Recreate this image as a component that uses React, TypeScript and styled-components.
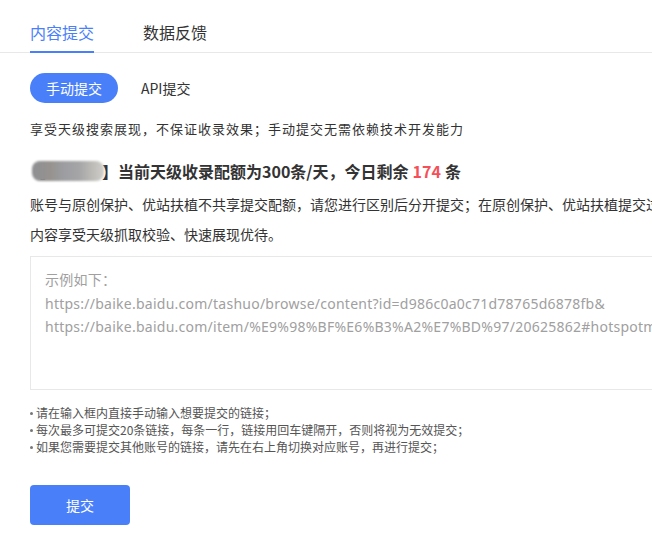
import React from "react";
import styled, { createGlobalStyle } from "styled-components";

const Global = createGlobalStyle`
  html, body { margin: 0; padding: 0; background: #fff; overflow: hidden; }
  body { font-family: "Noto Sans", "Noto Sans CJK SC", sans-serif; color: #333; }
`;

const Page = styled.div`
  width: 652px;
  height: 544px;
  overflow: hidden;
`;

const Inner = styled.div`
  width: 1000px;
  padding: 0 0 0 30px;
  box-sizing: border-box;
`;

const Tabs = styled.div`
  display: flex;
  gap: 49px;
  padding-top: 20px;
  border-bottom: 1px solid #e8e8e8;
  margin-left: -30px;
  padding-left: 30px;
`;

const Tab = styled.div<{ $active?: boolean }>`
  font-family: "Noto Sans CJK SC", sans-serif;
  font-size: 16px;
  line-height: 24px;
  padding-bottom: 7px;
  color: ${(p) => (p.$active ? "#4a7ffa" : "#333")};
  border-bottom: 2px solid ${(p) => (p.$active ? "#4a7ffa" : "transparent")};
  margin-bottom: -1px;
`;

const SubTabs = styled.div`
  display: flex;
  align-items: center;
  gap: 23px;
  margin-top: 20px;
`;

const Pill = styled.div<{ $active?: boolean }>`
  font-family: "Noto Sans CJK SC", sans-serif;
  height: 30px;
  line-height: 30px;
  font-size: 14px;
  border-radius: 15px;
  padding: ${(p) => (p.$active ? "0 16px" : "0")};
  background: ${(p) => (p.$active ? "#4a7ffa" : "transparent")};
  color: ${(p) => (p.$active ? "#fff" : "#333")};
`;

const Desc = styled.p`
  font-family: "Noto Sans CJK SC", sans-serif;
  margin: 15px 0 0;
  font-size: 13px;
  letter-spacing: 1px;
  line-height: 22px;
  color: #333;
`;

const Heading = styled.div`
  display: flex;
  align-items: center;
  margin-top: 19px;
  font-family: "Noto Sans CJK SC", sans-serif;
  font-size: 16px;
  font-weight: 700;
  line-height: 24px;
  color: #333;
`;

const Bracket = styled.span`
  font-weight: 700;
`;

const Blur = styled.span`
  display: inline-block;
  width: 72px;
  height: 20px;
  border-radius: 8px;
  margin-left: -14px;
  margin-right: -2px;
  background: linear-gradient(
    90deg,
    #8e8f93 0%,
    #96928f 25%,
    #9d9ea2 45%,
    #a5a5a7 65%,
    #bebdb8 85%,
    #cfcfcb 100%
  );
  filter: blur(0.8px);
`;

const Count = styled.span`
  color: #f5505a;
  margin: 0 4px;
`;

const Notice = styled.div`
  font-family: "Noto Sans CJK SC", sans-serif;
  margin-top: 6px;
  font-size: 14px;
  line-height: 30px;
  color: #333;
  white-space: nowrap;
`;

const TextBox = styled.div`
  margin-top: 7px;
  width: 800px;
  height: 134px;
  box-sizing: border-box;
  border: 1px solid #e8e8e8;
  padding: 11px 14px;
  font-size: 14px;
  line-height: 23.5px;
  letter-spacing: 0.25px;
  color: #a0a0a0;
  white-space: nowrap;
`;

const Hint = styled.div`
  font-family: "Noto Sans CJK SC", sans-serif;
  margin-top: 14px;
  font-size: 12px;
  line-height: 17px;
  color: #555;
`;

const HintLine = styled.div`
  display: flex;
  gap: 3px;
  &::before {
    content: "";
    width: 3px;
    height: 3px;
    border-radius: 50%;
    background: #777;
    align-self: center;
    margin-top: 1px;
  }
`;

const Submit = styled.button`
  display: block;
  margin-top: 30px;
  width: 100px;
  height: 40px;
  border: none;
  border-radius: 4px;
  background: #4a7ffa;
  color: #fff;
  font-family: "Noto Sans CJK SC", sans-serif;
  font-size: 14px;
  cursor: pointer;
`;

export default function App() {
  return (
    <Page>
      <Global />
      <Inner>
        <Tabs>
          <Tab $active>内容提交</Tab>
          <Tab>数据反馈</Tab>
        </Tabs>
        <SubTabs>
          <Pill $active>手动提交</Pill>
          <Pill>API提交</Pill>
        </SubTabs>
        <Desc>享受天级搜索展现，不保证收录效果；手动提交无需依赖技术开发能力</Desc>
        <Heading>
          <Bracket>【</Bracket>
          <Blur />
          <Bracket>】</Bracket>
          当前天级收录配额为300条/天，今日剩余<Count>174</Count>条
        </Heading>
        <Notice>
          账号与原创保护、优站扶植不共享提交配额，请您进行区别后分开提交；在原创保护、优站扶植提交过的内容享受天级抓取校验、快速展现优待。
          <br />
          内容享受天级抓取校验、快速展现优待。
        </Notice>
        <TextBox>
          <div>示例如下：</div>
          <div>https://baike.baidu.com/tashuo/browse/content?id=d986c0a0c71d78765d6878fb&amp;</div>
          <div>https://baike.baidu.com/item/%E9%98%BF%E6%B3%A2%E7%BD%97/20625862#hotspotmining</div>
        </TextBox>
        <Hint>
          <HintLine>请在输入框内直接手动输入想要提交的链接；</HintLine>
          <HintLine>每次最多可提交20条链接，每条一行，链接用回车键隔开，否则将视为无效提交；</HintLine>
          <HintLine>如果您需要提交其他账号的链接，请先在右上角切换对应账号，再进行提交；</HintLine>
        </Hint>
        <Submit>提交</Submit>
      </Inner>
    </Page>
  );
}
